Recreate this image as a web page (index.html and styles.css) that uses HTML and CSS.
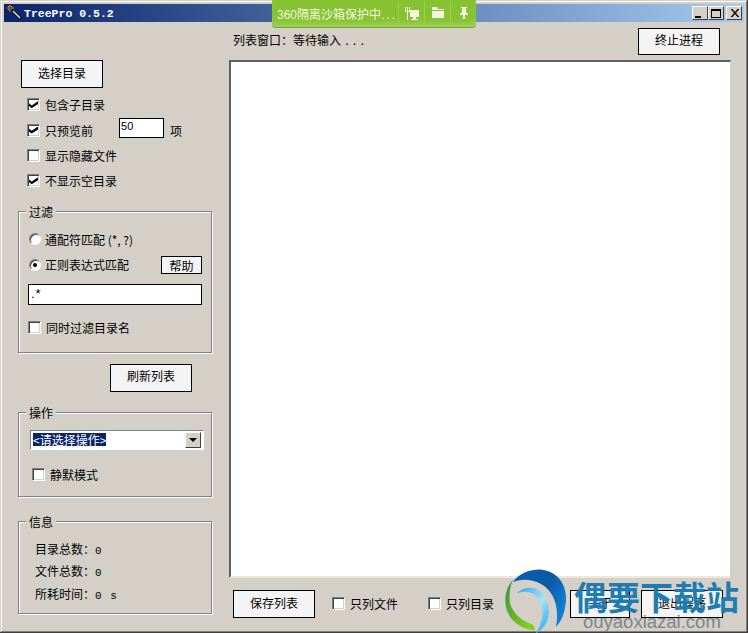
FILE: index.html
```html
<!DOCTYPE html>
<html lang="zh-cn">
<head>
    <meta charset="UTF-8">
    <title>TreePro 0.5.2</title>
    <link rel="stylesheet" href="styles.css">
</head>
<body>
    <div class="window">
        <div class="titlebar">
            <svg class="app-icon" width="16" height="16" viewBox="0 0 16 16">
                <path d="M5 5 L14 14" stroke="#111" stroke-width="3"/>
                <path d="M6 6 L13 13" stroke="#f2f4f6" stroke-width="1.2"/>
                <path d="M3 0 V7 M0 3 H7 M1 1 L5 5 M5 1 L1 5" stroke="#e09a3a" stroke-width="1"/>
                <rect x="2" y="2" width="3" height="3" fill="#8a4a20"/>
            </svg>
            <span class="title">TreePro 0.5.2</span>
            <div class="winbtns">
                <span class="winbtn"><i class="min"></i></span>
                <span class="winbtn"><i class="max"></i></span>
                <span class="winbtn close">
                    <svg width="9" height="8" viewBox="0 0 9 8"><path d="M1 0 L8 8 M2 0 L9 8 M8 0 L1 8 M9 0 L2 8" stroke="#000" stroke-width="1"/></svg>
                </span>
            </div>
        </div>

        <div class="main">
            <div class="left">
                <button class="btn choose">选择目录</button>

                <div class="opts">
                    <label class="row"><input type="checkbox" checked>包含子目录</label>
                    <div class="row">
                        <label class="row-label"><input type="checkbox" checked>只预览前</label>
                        <input class="count" type="text" value="50">
                        <span>项</span>
                    </div>
                    <label class="row"><input type="checkbox">显示隐藏文件</label>
                    <label class="row"><input type="checkbox" checked>不显示空目录</label>
                </div>

                <fieldset class="group filter">
                    <legend>过滤</legend>
                    <div class="group-body">
                        <label class="row radio"><input type="radio" name="mode">通配符匹配 (*, ?)</label>
                        <div class="row radio">
                            <label class="row-label"><input type="radio" name="mode" checked>正则表达式匹配</label>
                            <button class="btn help">帮助</button>
                        </div>
                        <input class="regex" type="text" value=".*">
                        <label class="row dirs"><input type="checkbox">同时过滤目录名</label>
                    </div>
                </fieldset>

                <button class="btn refresh">刷新列表</button>

                <fieldset class="group action">
                    <legend>操作</legend>
                    <div class="group-body">
                        <div class="select">
                            <span class="selected">&lt;请选择操作&gt;</span>
                            <span class="arrow"><i></i></span>
                        </div>
                        <label class="row silent"><input type="checkbox">静默模式</label>
                    </div>
                </fieldset>

                <fieldset class="group info">
                    <legend>信息</legend>
                    <div class="group-body">
                        <p>目录总数：<span class="num">0</span></p>
                        <p>文件总数：<span class="num">0</span></p>
                        <p>所耗时间：<span class="num">0 s</span></p>
                    </div>
                </fieldset>
            </div>

            <div class="right">
                <div class="top">
                    <span class="status">列表窗口：等待输入 <span class="num">...</span></span>
                    <button class="btn stop">终止进程</button>
                </div>
                <div class="list"></div>
                <div class="bottom">
                    <button class="btn">保存列表</button>
                    <label class="only first"><input type="checkbox">只列文件</label>
                    <label class="only"><input type="checkbox">只列目录</label>
                    <button class="btn about">关于</button>
                    <button class="btn">退出程序</button>
                </div>
            </div>
        </div>
    </div>

    <!-- 360 bar, sits over the title bar -->
    <div class="sandbox">
        <span class="sandbox-text">360隔离沙箱保护中<span class="dots">...</span></span>
        <span class="sandbox-icon">
            <svg width="14" height="13" viewBox="0 0 14 13" fill="#f1f7df">
                <path d="M0 0 H1 V4 H2 V0 H3 V4 H4 V0 H5 V5 H3 V13 H2 V5 H0 Z"/>
                <path d="M5 3 H14 V10 H11 V12 H13 V13 H6 V12 H8 V10 H5 Z"/>
            </svg>
        </span>
        <span class="sandbox-icon">
            <svg width="12" height="12" viewBox="0 0 12 12" fill="#f1f7df">
                <path d="M0 0 H5 L6 2 H12 V3 H0 Z"/>
                <path d="M0 4 H12 V11 H0 Z"/>
            </svg>
        </span>
        <span class="sandbox-icon">
            <svg width="10" height="12" viewBox="0 0 10 12" fill="#f1f7df">
                <path d="M2 0 H8 V1 H7 V5 L9 7 V8 H6 V12 H4 V8 H1 V7 L3 5 V1 H2 Z"/>
            </svg>
        </span>
    </div>

    <!-- download site watermark -->
    <div class="mark">
        <svg class="mark-logo" width="80" height="68" viewBox="0 0 240 204">
            <defs>
                <linearGradient id="blue" x1="0" y1="0" x2="1" y2="0.6">
                    <stop offset="0" stop-color="#0b5fae"/>
                    <stop offset="0.6" stop-color="#0a58a6"/>
                    <stop offset="1" stop-color="#1080d0"/>
                </linearGradient>
                <linearGradient id="sky" x1="0" y1="0" x2="0.8" y2="1">
                    <stop offset="0" stop-color="#2a9fe8"/>
                    <stop offset="0.55" stop-color="#a4e6fb"/>
                    <stop offset="1" stop-color="#35aef0"/>
                </linearGradient>
                <linearGradient id="green" x1="0" y1="0" x2="0.7" y2="1">
                    <stop offset="0" stop-color="#3a963c"/>
                    <stop offset="0.5" stop-color="#58ac30"/>
                    <stop offset="1" stop-color="#84cc1e"/>
                </linearGradient>
            </defs>
            <path d="M38 52 C60 20 100 12 125 14 C175 20 200 60 198 105 C196 140 185 170 168 185 C175 150 172 110 150 80 C125 45 70 35 38 52 Z" fill="url(#blue)"/>
            <path d="M50 85 C75 60 115 62 135 95 C155 130 150 180 110 204 L108 204 C130 170 135 130 115 100 C100 80 75 75 50 85 Z" fill="url(#sky)"/>
            <path d="M38 45 C12 75 8 120 30 155 C50 185 85 195 105 195 L100 180 C70 170 40 150 30 115 C27 90 30 65 38 45 Z" fill="url(#green)"/>
        </svg>
        <div class="mark-text">
            <div class="mark-name">偶要下载站</div>
            <div class="mark-url">ouyaoxiazai.com</div>
        </div>
    </div>
</body>
</html>
```
FILE: styles.css
```css
* {
    box-sizing: border-box;
    margin: 0;
    padding: 0;
}

body {
    width: 748px;
    height: 633px;
    overflow: hidden;
    font-family: "Noto Sans CJK SC", "Liberation Sans", sans-serif;
    font-size: 12px;
    color: #000;
    background: #d4d0c8;
    position: relative;
}

.window {
    width: 748px;
    height: 633px;
    padding: 4px 4px 0;
    box-shadow: inset -1px -1px 0 #404040, inset 1px 1px 0 #d4d0c8, inset -2px -2px 0 #808080, inset 2px 2px 0 #fff;
    display: flex;
    flex-direction: column;
}

.titlebar {
    height: 18px;
    display: flex;
    align-items: center;
    padding-left: 3px;
    background: linear-gradient(90deg, #0a246a, #a6caf0);
    flex-shrink: 0;
}

.app-icon {
    margin-right: 1px;
}

.title {
    font-family: "Liberation Mono", monospace;
    font-weight: bold;
    font-size: 11.5px;
    color: #fff;
}

.winbtns {
    display: flex;
    margin-left: auto;
    margin-right: 2px;
}

.winbtn {
    width: 16px;
    height: 14px;
    background: #d4d0c8;
    border: 1px solid;
    border-color: #fff #404040 #404040 #fff;
    display: flex;
    align-items: center;
    justify-content: center;
}

.close {
    margin-left: 2px;
}

.min {
    display: block;
    width: 6px;
    height: 2px;
    background: #000;
    margin: 7px 4px 0 0;
}

.max {
    display: block;
    width: 10px;
    height: 9px;
    border: 1px solid #000;
    border-top-width: 2px;
}

.main {
    flex: 1;
    display: flex;
}

.left {
    width: 225px;
    padding: 38px 0 0 14px;
    flex-shrink: 0;
}

.btn {
    width: 82px;
    height: 28px;
    padding-bottom: 4px;
    border: 1px solid #000;
    background: #f4f4f4;
    font: inherit;
    color: #000;
    display: block;
    flex-shrink: 0;
}

.choose {
    margin-left: 3px;
}

.stop {
    height: 27px;
}

.opts {
    margin: 4px 0 0 9px;
}

.row {
    height: 25.4px;
    display: flex;
    align-items: center;
}

.row-label {
    display: flex;
    align-items: center;
}

input[type="checkbox"],
input[type="radio"] {
    appearance: none;
    width: 13px;
    height: 13px;
    margin-right: 5px;
    background: #fff;
    border: 1px solid;
    border-color: #808080 #fff #fff #808080;
    box-shadow: inset 1px 1px 0 #404040, inset -1px -1px 0 #d4d0c8;
    position: relative;
    flex-shrink: 0;
}

input[type="checkbox"]:checked::after {
    content: "";
    position: absolute;
    left: 1px;
    top: 2px;
    width: 9px;
    height: 7px;
    background: #000;
    clip-path: polygon(0 30%, 30% 60%, 100% 0, 100% 40%, 30% 100%, 0 70%);
}

input[type="radio"] {
    width: 12px;
    height: 12px;
    border-radius: 50%;
    margin-right: 4px;
    box-shadow: inset 1px 1px 0 #404040;
}

input[type="radio"]:checked::after {
    content: "";
    position: absolute;
    left: 3px;
    top: 3px;
    width: 4px;
    height: 4px;
    border-radius: 50%;
    background: #000;
}

.count {
    width: 45px;
    height: 20px;
    margin: 0 6px 4px 26px;
    border: 1px solid #000;
    padding: 0 0 5px 1px;
    font-family: "Liberation Sans", sans-serif;
    font-size: 11px;
}

.group {
    width: 194px;
    min-width: 0;
    border: 1px solid #808080;
    box-shadow: 1px 1px 0 #fff, inset 1px 1px 0 #fff;
}

.group legend {
    margin-left: 7px;
    padding: 0 3px;
    line-height: 14px;
    background: #d4d0c8;
}

.filter {
    margin-top: 11px;
    height: 148px;
}

.filter .group-body {
    padding: 8px 9px 0;
}

.radio {
    padding-left: 1px;
}

.help {
    width: 41px;
    height: 18px;
    padding-bottom: 2px;
    margin-left: auto;
}

.regex {
    display: block;
    width: 174px;
    height: 21px;
    margin-top: 7px;
    border: 1px solid #000;
    padding: 0 0 2px 2px;
    font-family: "Liberation Sans", sans-serif;
    font-size: 13px;
    letter-spacing: 1px;
}

.dirs {
    margin-top: 9px;
}

.refresh {
    margin: 11px 0 0 92px;
}

.action {
    margin-top: 14px;
    height: 91px;
}

.action .group-body {
    padding: 10px 7px 0 11px;
}

.select {
    width: 174px;
    height: 20px;
    display: flex;
    align-items: center;
    padding: 0 2px 0 2px;
    background: #fff;
    border: 1px solid;
    border-color: #808080 #fff #fff #808080;
}

.selected {
    background: #0a246a;
    color: #fff;
    line-height: 13px;
    height: 13px;
}

.arrow {
    width: 16px;
    height: 16px;
    margin-left: auto;
    background: #d4d0c8;
    border: 1px solid;
    border-color: #fff #404040 #404040 #fff;
    display: flex;
    align-items: center;
    justify-content: center;
}

.arrow i {
    display: block;
    border: 4px solid transparent;
    border-top-color: #000;
    border-bottom-width: 0;
}

.silent {
    margin: 12px 0 0 2px;
}

.info {
    margin-top: 18px;
    height: 99px;
}

.info .group-body {
    padding: 9px 0 0 16px;
}

.info p {
    height: 22.5px;
    line-height: 22.5px;
}

.num {
    font-family: "Liberation Mono", monospace;
    font-size: 11px;
    letter-spacing: 1px;
}

.right {
    flex: 1;
    display: flex;
    flex-direction: column;
    padding-right: 13px;
    min-width: 0;
}

.top {
    height: 38px;
    padding: 6px 11px 0 4px;
    display: flex;
    align-items: flex-start;
    justify-content: space-between;
}

.status {
    line-height: 24px;
}

.list {
    height: 518px;
    background: #fff;
    border-top: 2px solid #606060;
    border-left: 2px solid #606060;
    border-right: 1px solid #d4d0c8;
    border-bottom: 2px solid #ece9d8;
}

.bottom {
    display: flex;
    align-items: center;
    padding: 12px 0 0 4px;
}

.only {
    display: flex;
    align-items: center;
    margin-left: 30px;
    padding-bottom: 2px;
}

.first {
    margin-left: 17px;
}

.about {
    width: 60px;
    margin-left: 76px;
    margin-right: 11px;
}

/* overlays */
.sandbox {
    position: absolute;
    left: 272px;
    top: 0;
    width: 204px;
    height: 28px;
    display: flex;
    align-items: center;
    padding: 0 0 1px 5px;
    color: #f1f7df;
    font-size: 12px;
    background: #86c232;
    border-bottom: 1px solid #6ea82a;
    border-radius: 0 0 4px 4px;
    box-shadow: inset 0 -7px 8px -6px #b5dc7a;
}

.sandbox-text {
    width: 121px;
    white-space: nowrap;
    font-family: "Liberation Sans", "Noto Sans CJK SC", sans-serif;
}

.dots {
    letter-spacing: 2px;
}

.sandbox-icon {
    width: 26px;
    height: 24px;
    display: flex;
    align-items: center;
    justify-content: center;
    border-left: 1px solid #9bd04c;
}

.mark {
    position: absolute;
    left: 500px;
    top: 565px;
    display: flex;
}

.mark-logo {
    flex-shrink: 0;
}

.mark-text {
    margin-left: -6px;
}

.mark-name {
    font-size: 33px;
    line-height: 38px;
    height: 37px;
    margin-top: 12px;
    font-weight: bold;
    color: #1f7cb2;
    white-space: nowrap;
}

.mark-url {
    font-family: "Liberation Sans", sans-serif;
    font-size: 18.5px;
    line-height: 16px;
    margin-left: 9px;
    color: #7d868c;
    white-space: nowrap;
}
```
